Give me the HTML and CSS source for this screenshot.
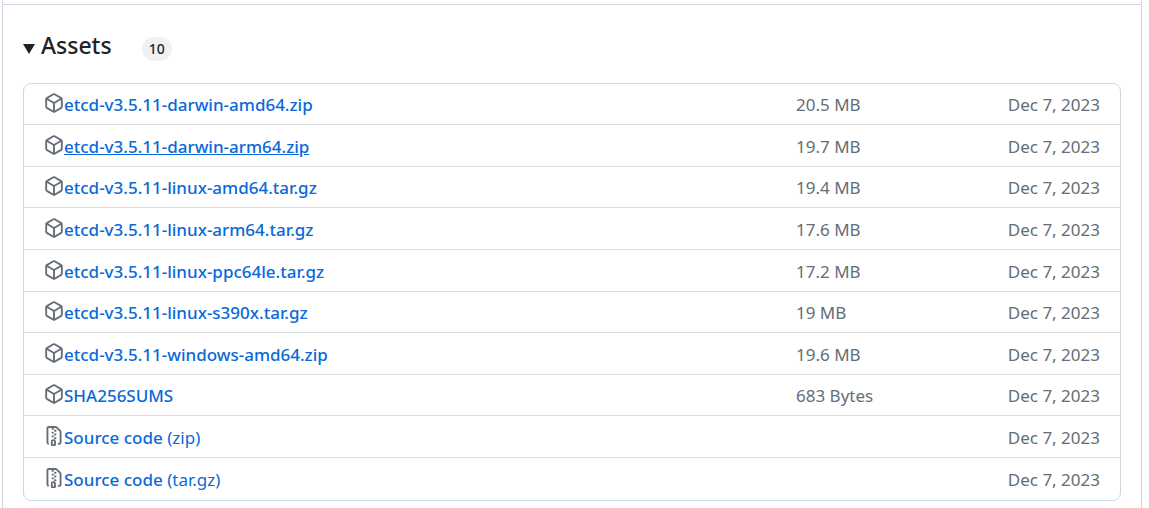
FILE: index.html
```html
<!DOCTYPE html>
<html lang="en">
<head>
  <meta charset="UTF-8">
  <meta name="viewport" content="width=device-width, initial-scale=1.0">
  <title>Assets</title>
  <link rel="stylesheet" href="styles.css">
</head>
<body>
<svg class="sprite" aria-hidden="true">
  <symbol id="package" viewBox="0 0 16 16">
    <path fill-rule="evenodd" d="M8.878.392a1.75 1.75 0 0 0-1.756 0l-5.25 3.045A1.75 1.75 0 0 0 1 4.951v6.098c0 .624.332 1.2.872 1.514l5.25 3.045a1.75 1.75 0 0 0 1.756 0l5.25-3.045c.54-.313.872-.89.872-1.514V4.951c0-.624-.332-1.2-.872-1.514L8.878.392ZM7.875 1.69a.25.25 0 0 1 .25 0l4.63 2.685L8 7.133 3.245 4.375l4.63-2.685ZM2.5 5.677v5.372c0 .09.047.171.125.216l4.625 2.683V8.432ZM8.75 13.948l4.625-2.683a.25.25 0 0 0 .125-.216V5.677L8.75 8.432Z"/>
  </symbol>
  <symbol id="file-zip" viewBox="0 0 16 16">
    <path d="M3.5 1.75v11.5c0 .09.048.173.126.217a.75.75 0 0 1-.752 1.298A1.748 1.748 0 0 1 2 13.25V1.75C2 .784 2.784 0 3.75 0h5.586c.464 0 .909.185 1.237.513l2.914 2.914c.329.328.513.773.513 1.237v8.586A1.75 1.75 0 0 1 12.25 15h-.5a.75.75 0 0 1 0-1.5h.5a.25.25 0 0 0 .25-.25V4.664a.25.25 0 0 0-.073-.177L9.513 1.573a.25.25 0 0 0-.177-.073H7.25a.75.75 0 0 1 0 1.5h-.5a.75.75 0 0 1 0-1.5h-3a.25.25 0 0 0-.25.25Zm3.75 8.75h.5c.966 0 1.75.784 1.75 1.75v3a.75.75 0 0 1-.75.75h-2.5a.75.75 0 0 1-.75-.75v-3c0-.966.784-1.75 1.75-1.75ZM6 5.25a.75.75 0 0 1 .75-.75h.5a.75.75 0 0 1 0 1.5h-.5A.75.75 0 0 1 6 5.25Zm.75 2.25h.5a.75.75 0 0 1 0 1.5h-.5a.75.75 0 0 1 0-1.5ZM8 6.75A.75.75 0 0 1 8.75 6h.5a.75.75 0 0 1 0 1.5h-.5A.75.75 0 0 1 8 6.75ZM8.75 3h.5a.75.75 0 0 1 0 1.5h-.5a.75.75 0 0 1 0-1.5ZM8 9.75A.75.75 0 0 1 8.75 9h.5a.75.75 0 0 1 0 1.5h-.5A.75.75 0 0 1 8 9.75Zm-1 2.5v2.25h1v-2.25a.25.25 0 0 0-.25-.25h-.5a.25.25 0 0 0-.25.25Z"/>
  </symbol>
</svg>
<main class="release">
  <details class="assets" open>
    <summary class="assets-summary">
      <svg class="caret" viewBox="0 0 12 10" aria-hidden="true"><path d="M0 0h12L6 10z"/></svg>
      <h3>Assets</h3>
      <span class="counter">10</span>
    </summary>
    <ul class="asset-list">
      <li>
        <div class="name"><svg class="icon" aria-hidden="true"><use href="#package"/></svg><a href="#">etcd-v3.5.11-darwin-amd64.zip</a></div>
        <div class="meta"><span>20.5 MB</span><time datetime="2023-12-07">Dec 7, 2023</time></div>
      </li>
      <li>
        <div class="name"><svg class="icon" aria-hidden="true"><use href="#package"/></svg><a class="active" href="#">etcd-v3.5.11-darwin-arm64.zip</a></div>
        <div class="meta"><span>19.7 MB</span><time datetime="2023-12-07">Dec 7, 2023</time></div>
      </li>
      <li>
        <div class="name"><svg class="icon" aria-hidden="true"><use href="#package"/></svg><a href="#">etcd-v3.5.11-linux-amd64.tar.gz</a></div>
        <div class="meta"><span>19.4 MB</span><time datetime="2023-12-07">Dec 7, 2023</time></div>
      </li>
      <li>
        <div class="name"><svg class="icon" aria-hidden="true"><use href="#package"/></svg><a href="#">etcd-v3.5.11-linux-arm64.tar.gz</a></div>
        <div class="meta"><span>17.6 MB</span><time datetime="2023-12-07">Dec 7, 2023</time></div>
      </li>
      <li>
        <div class="name"><svg class="icon" aria-hidden="true"><use href="#package"/></svg><a href="#">etcd-v3.5.11-linux-ppc64le.tar.gz</a></div>
        <div class="meta"><span>17.2 MB</span><time datetime="2023-12-07">Dec 7, 2023</time></div>
      </li>
      <li>
        <div class="name"><svg class="icon" aria-hidden="true"><use href="#package"/></svg><a href="#">etcd-v3.5.11-linux-s390x.tar.gz</a></div>
        <div class="meta"><span>19 MB</span><time datetime="2023-12-07">Dec 7, 2023</time></div>
      </li>
      <li>
        <div class="name"><svg class="icon" aria-hidden="true"><use href="#package"/></svg><a href="#">etcd-v3.5.11-windows-amd64.zip</a></div>
        <div class="meta"><span>19.6 MB</span><time datetime="2023-12-07">Dec 7, 2023</time></div>
      </li>
      <li>
        <div class="name"><svg class="icon" aria-hidden="true"><use href="#package"/></svg><a href="#">SHA256SUMS</a></div>
        <div class="meta"><span>683 Bytes</span><time datetime="2023-12-07">Dec 7, 2023</time></div>
      </li>
      <li>
        <div class="name"><svg class="icon" aria-hidden="true"><use href="#file-zip"/></svg><a href="#">Source code <span class="format">(zip)</span></a></div>
        <div class="meta"><time datetime="2023-12-07">Dec 7, 2023</time></div>
      </li>
      <li>
        <div class="name"><svg class="icon" aria-hidden="true"><use href="#file-zip"/></svg><a href="#">Source code <span class="format">(tar.gz)</span></a></div>
        <div class="meta"><time datetime="2023-12-07">Dec 7, 2023</time></div>
      </li>
    </ul>
  </details>
</main>
</body>
</html>
```
FILE: styles.css
```css
* {
  box-sizing: border-box;
}

body {
  margin: 0;
  font-family: "Segoe UI", "Noto Sans", "Open Sans", sans-serif;
  font-size: 17px;
  line-height: 24px;
  color: #1f2328;
  background: #fff;
}

.sprite {
  display: none;
}

.release {
  margin: 0 7px 0 2px;
  padding-top: 4px;
  min-height: 100vh;
  border: 1px solid #d0d7de;
  border-width: 0 1px;
}

.assets {
  padding: 28px 20px 0;
  border-top: 1px solid #d0d7de;
}

.assets-summary {
  display: flex;
  align-items: baseline;
  height: 30px;
  margin-bottom: 20px;
  list-style: none;
  cursor: pointer;
}

.caret {
  width: 12px;
  height: 10px;
  margin: 0 6px 2px 0;
  fill: #1f2328;
}

.assets-summary h3 {
  margin: 0 30px 0 0;
  font-size: 23px;
  font-weight: 500;
}

.counter {
  padding: 0 7px;
  border-radius: 24px;
  font-size: 14px;
  font-weight: 500;
  background: #eff1f3;
}

.asset-list {
  margin: 0;
  padding: 0;
  list-style: none;
  border: 1px solid #d0d7de;
  border-radius: 8px;
}

.asset-list li {
  display: grid;
  grid-template-columns: 47fr 19fr;
  align-items: center;
  min-height: 42px;
  padding: 2px 20px 0;
  border-bottom: 1px solid #d8dee4;
}

.asset-list li:nth-child(5n + 1),
.asset-list li:nth-child(5n + 3) {
  min-height: 41px;
}

.asset-list li:last-child {
  border-bottom: none;
}

.name {
  display: flex;
  align-items: center;
}

.icon {
  width: 20px;
  height: 20px;
  margin-bottom: 4px;
  fill: #656d76;
}

.name a {
  font-weight: 500;
  color: #0969da;
  text-decoration: none;
}

.name a:hover,
.name a.active {
  text-decoration: underline;
}

.format {
  font-weight: 400;
}

.meta {
  display: flex;
  color: #656d76;
}

.meta time {
  margin-left: auto;
}
```
